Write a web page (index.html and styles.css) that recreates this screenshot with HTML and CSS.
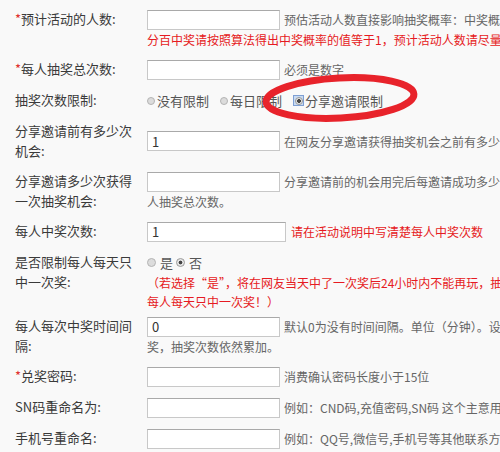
FILE: index.html
```html
<!DOCTYPE html>
<html lang="zh-CN">
<head>
    <meta charset="UTF-8">
    <link rel="stylesheet" href="styles.css">
    <title>抽奖设置</title>
</head>
<body>
    <div class="form">
        <div class="row">
            <div class="label"><span class="req">*</span>预计活动的人数:</div>
            <div class="field">
                <div class="line"><input class="txt" type="text"><span class="tip">预估活动人数直接影响抽奖概率：中奖概率=奖品总数/(预估活动人数*每人抽奖次数) 如果要百</span></div>
                <div class="sub red">分百中奖请按照算法得出中奖概率的值等于1，预计活动人数请尽量准确填写</div>
            </div>
        </div>

        <div class="row">
            <div class="label"><span class="req">*</span>每人抽奖总次数:</div>
            <div class="field">
                <div class="line"><input class="txt" type="text"><span class="tip">必须是数字</span></div>
            </div>
        </div>

        <div class="row">
            <div class="label">抽奖次数限制:</div>
            <div class="field">
                <div class="line opts">
                    <label class="opt"><input type="radio" name="limit">没有限制</label>
                    <label class="opt"><input type="radio" name="limit">每日限制</label>
                    <label class="opt"><span class="focus"><input type="radio" name="limit" checked></span>分享邀请限制</label>
                </div>
            </div>
            <svg class="mark" width="170" height="60" viewBox="0 0 170 60">
                <ellipse cx="82" cy="30" rx="74" ry="20" transform="rotate(-3 82 30)" fill="none" stroke="#e8232b" stroke-width="7"/>
            </svg>
        </div>

        <div class="row mid">
            <div class="label">分享邀请前有多少次机会:</div>
            <div class="field">
                <div class="line"><input class="txt" type="text" value="1"><span class="tip">在网友分享邀请获得抽奖机会之前有多少次抽奖机会</span></div>
            </div>
        </div>

        <div class="row">
            <div class="label">分享邀请多少次获得一次抽奖机会:</div>
            <div class="field">
                <div class="line"><input class="txt" type="text"><span class="tip">分享邀请前的机会用完后每邀请成功多少人获得一次抽奖机会，总数不超过每</span></div>
                <div class="sub">人抽奖总次数。</div>
            </div>
        </div>

        <div class="row">
            <div class="label">每人中奖次数:</div>
            <div class="field">
                <div class="line"><input class="txt wide" type="text" value="1"><span class="tip red">请在活动说明中写清楚每人中奖次数</span></div>
            </div>
        </div>

        <div class="row tight">
            <div class="label">是否限制每人每天只中一次奖:</div>
            <div class="field">
                <div class="line opts small">
                    <label class="opt"><input type="radio" name="daily">是</label>
                    <label class="opt"><input type="radio" name="daily" checked>否</label>
                </div>
                <div class="sub red">（若选择“是”，将在网友当天中了一次奖后24小时内不能再玩，抽奖次数也不能再用，</div>
                <div class="sub red">每人每天只中一次奖！）</div>
            </div>
        </div>

        <div class="row">
            <div class="label">每人每次中奖时间间隔:</div>
            <div class="field">
                <div class="line"><input class="txt" type="text" value="0"><span class="tip">默认0为没有时间间隔。单位（分钟）。设置后在间隔时间内不能再次中</span></div>
                <div class="sub">奖，抽奖次数依然累加。</div>
            </div>
        </div>

        <div class="row">
            <div class="label"><span class="req">*</span>兑奖密码:</div>
            <div class="field">
                <div class="line"><input class="txt" type="text"><span class="tip">消费确认密码长度小于15位</span></div>
            </div>
        </div>

        <div class="row">
            <div class="label">SN码重命名为:</div>
            <div class="field">
                <div class="line"><input class="txt" type="text"><span class="tip">例如：CND码,充值密码,SN码 这个主意用于显示在中奖页面</span></div>
            </div>
        </div>

        <div class="row">
            <div class="label">手机号重命名:</div>
            <div class="field">
                <div class="line"><input class="txt" type="text"><span class="tip">例如：QQ号,微信号,手机号等其他联系方式</span></div>
            </div>
        </div>
    </div>
</body>
</html>
```

FILE: styles.css
```css
body {
    margin: 0;
    padding: 4px 0 0 15px;
    background-color: #f9f9f9;
    color: #333;
    font-family: "Noto Sans CJK SC", "Microsoft YaHei", sans-serif;
    font-size: 13px;
    overflow: hidden;
}

.form {
    width: 900px;
}

.row {
    position: relative;
    display: grid;
    grid-template-columns: 132px 1fr;
    align-items: start;
    padding: 5px 0;
}

.row.mid {
    align-items: center;
}

.row.tight {
    padding-bottom: 0;
}

.label {
    width: 124px;
    line-height: 20px;
    color: #3a3a3a;
}

.req {
    color: #e0312f;
}

.line {
    display: flex;
    align-items: center;
    height: 21px;
    white-space: nowrap;
}

.sub {
    line-height: 19px;
    font-size: 12px;
    color: #666;
    white-space: nowrap;
}

.txt {
    box-sizing: border-box;
    width: 133px;
    height: 20px;
    margin: 0;
    padding: 0 4px;
    border: 1px solid #c8c8c8;
    border-top-color: #a9a9a9;
    background: #fff;
    color: #333;
    font-family: inherit;
    font-size: 13px;
}

.txt.wide {
    width: 139px;
}

.tip {
    margin-left: 4px;
    font-size: 12px;
    color: #666;
}

.txt.wide + .tip {
    margin-left: 5px;
}

.red {
    color: #e61a22;
}

/* radio groups */
.opts {
    color: #555;
}

.opt {
    display: flex;
    align-items: center;
    margin-right: 11px;
}

.opt input {
    appearance: none;
    -webkit-appearance: none;
    box-sizing: border-box;
    width: 8px;
    height: 8px;
    margin: 0 2px 0 0;
    border: 1px solid #b4b4b4;
    border-radius: 50%;
    background: #dcdcdc;
}

.opt input:checked {
    background: radial-gradient(circle, #444 0, #444 1.6px, #e6e6e6 2.2px);
    border-color: #9a9a9a;
}

.focus {
    display: inline-flex;
    align-items: center;
    justify-content: center;
    box-sizing: border-box;
    width: 11px;
    height: 11px;
    margin-right: 1px;
    border: 1px solid #7f9fd3;
    background: #c9dbf3;
}

.focus input {
    margin: 0;
}

.opts.small .opt {
    margin-right: 3px;
}

.opts.small .opt input {
    width: 9px;
    height: 9px;
    margin-right: 4px;
}

/* red hand-drawn circle over the screenshot */
.mark {
    position: absolute;
    left: 243px;
    top: -17px;
    pointer-events: none;
}
```
